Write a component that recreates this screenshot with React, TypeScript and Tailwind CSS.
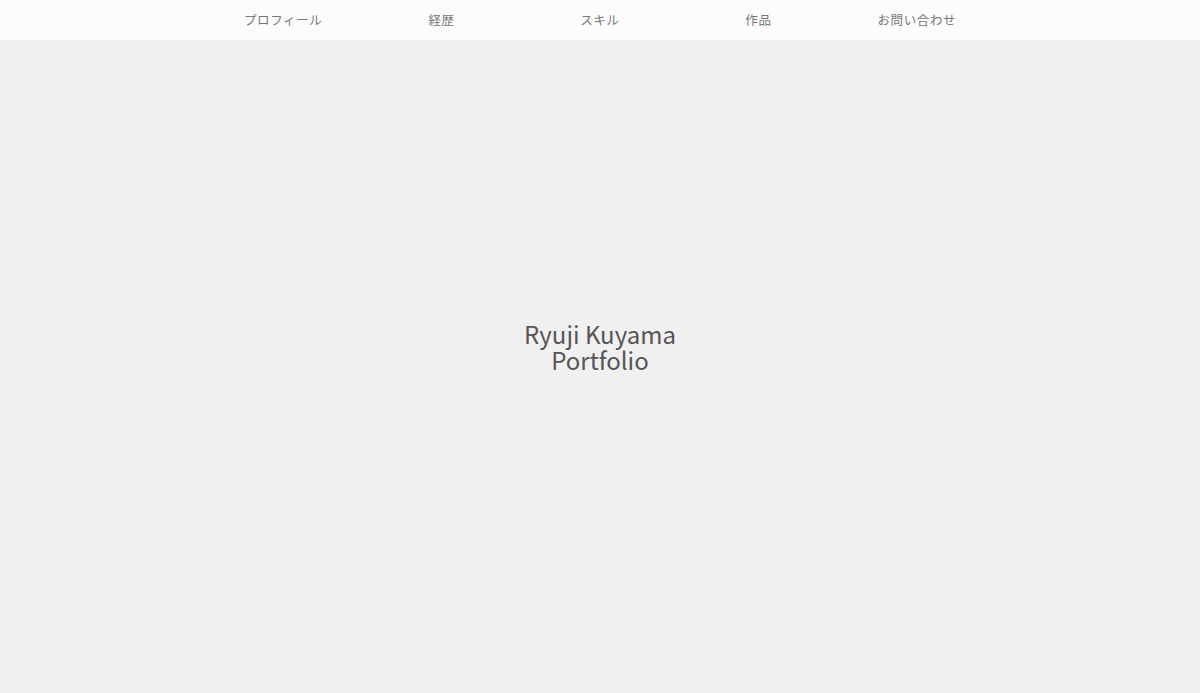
const NAV_ITEMS = ['プロフィール', '経歴', 'スキル', '作品', 'お問い合わせ'];

export default function App() {
  return (
    <div
      className="flex h-[693px] flex-col bg-[#f0f0f0]"
      style={{ fontFamily: '"Noto Sans CJK JP", sans-serif' }}
    >
      <header className="h-10 shrink-0 bg-[#fcfcfc]">
        <nav className="mx-auto flex h-full w-[66%]">
          {NAV_ITEMS.map((item) => (
            <a
              key={item}
              className="flex flex-1 items-center justify-center text-[12.5px] tracking-[0.05em] text-[#777]"
            >
              {item}
            </a>
          ))}
        </nav>
      </header>

      <main className="flex flex-1 items-center justify-center pb-[40px]">
        <h1 className="text-center text-[24px] leading-[26px] text-[#555]">
          Ryuji Kuyama
          <br />
          Portfolio
        </h1>
      </main>
    </div>
  );
}
